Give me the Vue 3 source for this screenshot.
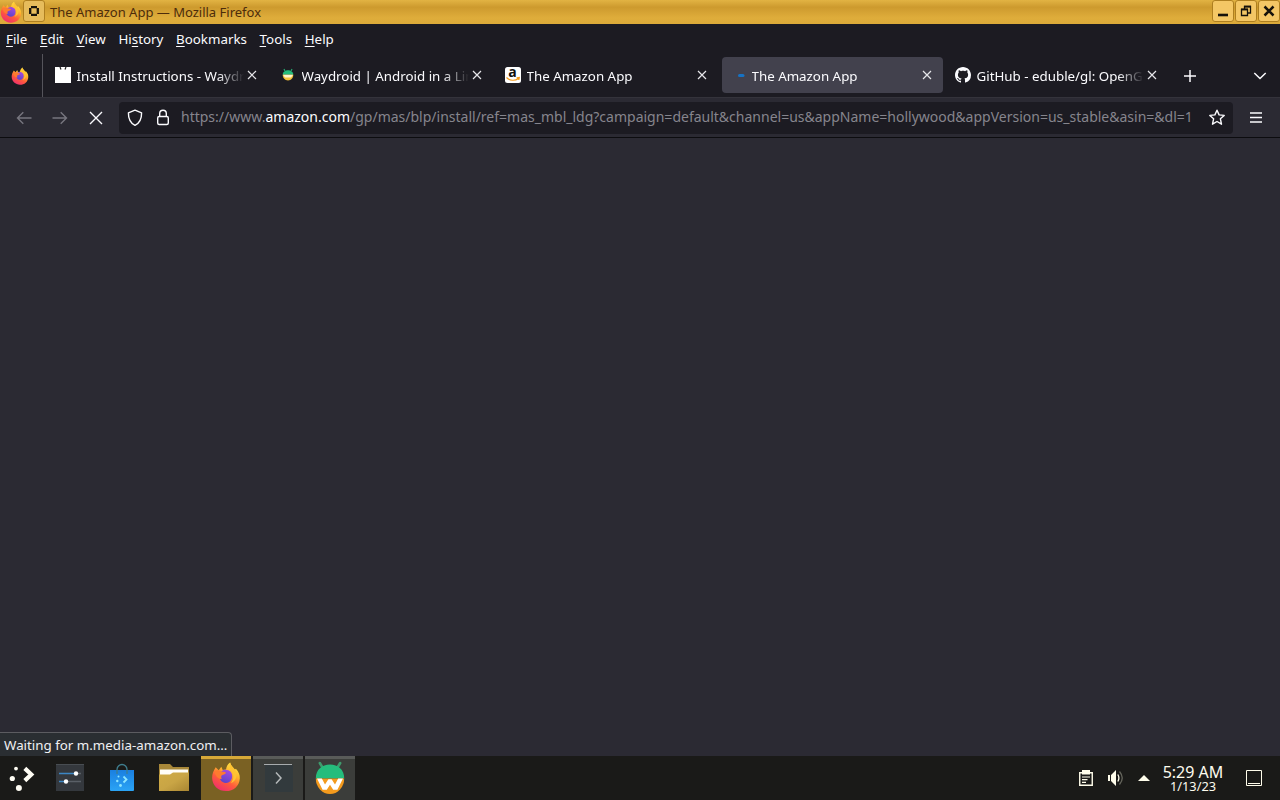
<template>
  <div class="desktop">
    <svg class="defs" width="0" height="0">
      <defs>
        <linearGradient id="flame" x1="0.8" y1="0" x2="0.25" y2="1">
          <stop offset="0" stop-color="#fff04a" />
          <stop offset="0.35" stop-color="#ffb32c" />
          <stop offset="0.65" stop-color="#ff5a3c" />
          <stop offset="1" stop-color="#ee2b72" />
        </linearGradient>
        <linearGradient id="globe" x1="0.7" y1="0" x2="0.3" y2="1">
          <stop offset="0" stop-color="#a64be0" />
          <stop offset="1" stop-color="#5a43c8" />
        </linearGradient>
        <linearGradient id="bag" x1="0" y1="0" x2="0" y2="1">
          <stop offset="0" stop-color="#1a7fe0" />
          <stop offset="1" stop-color="#2ba4f5" />
        </linearGradient>
        <linearGradient id="folder" x1="0" y1="0" x2="1" y2="1">
          <stop offset="0" stop-color="#d0ab45" />
          <stop offset="0.5" stop-color="#c9a545" />
          <stop offset="1" stop-color="#a98632" />
        </linearGradient>
        <symbol id="firefox" viewBox="0 0 32 32">
          <path fill="url(#flame)" d="M5 6 L8.2 9.3 L11 5.5 L12.5 9 L16 8.5 C16.5 5 18 2.5 20.4 1 C21 4 23.5 6 25.5 8.5 L26.6 7.6 C29.5 11 31 14 30.7 18 C30.3 26 24 31.5 16 31.5 C7.8 31.5 1.5 25.5 1.2 17.5 C1.1 13 2.8 9.5 5 6 Z" />
          <path fill="url(#globe)" d="M11.5 10.3 C14 8 18.5 8.2 21 11 C23.5 14 23 19.5 19.5 21.8 C16 24 11.5 22.5 9.8 19.2 C8.5 16.5 9.2 12.5 11.5 10.3 Z" />
          <path fill="#ff7a2f" d="M3.6 10.5 C6 8.8 9.5 9.2 11.5 11 C13.2 10.6 15 11 16 12 C15.2 13.6 13.6 14 12 14.4 C10.6 15.4 10.5 17 11.6 18.5 C8 19.5 4.5 15.5 3.6 10.5 Z" />
          <path fill="#ffc233" d="M20.4 1 C19 5.5 20.5 8.5 22.5 11.3 C24.7 15 24.3 19.5 21.2 23 C25.5 21.5 28 17 27.2 12.5 C26.5 8 21.5 6 20.4 1 Z" />
        </symbol>
        <symbol id="droid" viewBox="0 0 32 34">
          <path d="M5.8 2 L8.8 7 M26.2 2 L23.2 7" stroke="#3f9a6c" stroke-width="2.6" stroke-linecap="round" />
          <path d="M1.8 17.5 C1.8 8.5 8 3.5 16 3.5 S30.2 8.5 30.2 17.5 Z" fill="#25bd7c" />
          <path d="M1.8 17.5 H30.2 A14.2 15.5 0 0 1 1.8 17.5 Z" fill="#f39a1d" />
          <path d="M3 17.5 L8.6 28.8 H12.8 L16 23.8 L19.2 28.8 H23.4 L29 17.5 H24.2 L21 23.6 L17.6 18.3 H14.4 L11 23.6 L7.8 17.5 Z" fill="#fff" />
        </symbol>
      </defs>
    </svg>

    <header class="titlebar">
      <svg class="title-logo" width="22" height="22"><use href="#firefox" /></svg>
      <span class="win-btn pin">
        <svg width="20" height="20"><path d="M7 6.2 H13 M7 13.8 H13 M6.2 7 V13 M13.8 7 V13" fill="none" stroke="#17130b" stroke-width="2.3" /></svg>
      </span>
      <span class="title">The Amazon App — Mozilla Firefox</span>
      <div class="win-controls">
        <span class="win-btn"><svg width="20" height="20"><path d="M5 14 H15" stroke="#17130b" stroke-width="2.6" /></svg></span>
        <span class="win-btn"><svg width="20" height="20" fill="none" stroke="#17130b"><path d="M5.5 8.5 H11.5 V14.5 H5.5 Z M8.5 8 V5.5 H14.5 V12 H12" stroke-width="1.3" /><path d="M5 8.3 H12 M8 5.6 H15" stroke-width="1.8" /></svg></span>
        <span class="win-btn"><svg width="20" height="20"><path d="M5.5 5.5 L14.5 14.5 M14.5 5.5 L5.5 14.5" stroke="#17130b" stroke-width="2.5" /></svg></span>
      </div>
    </header>

    <nav class="menubar">
      <span v-for="m in menus" :key="m.key + m.after">{{ m.before }}<u>{{ m.key }}</u>{{ m.after }}</span>
    </nav>

    <div class="tabs">
      <div class="view"><svg width="18" height="18"><use href="#firefox" /></svg></div>
      <div v-for="(t, i) in tabs" :key="i" class="tab" :class="{ active: t.active }">
        <svg v-if="t.icon === 'docs'" class="fav" viewBox="0 0 16 16"><path d="M0 0 H16 V16 H0 Z" fill="#fff" /><path d="M5 0 L6 2.5 M11 0 L10 2.5" stroke="#222" stroke-width="1.2" /></svg>
        <svg v-else-if="t.icon === 'droid'" class="fav" viewBox="0 0 16 16">
          <path d="M4 2 L5 4 M12 2 L11 4" stroke="#25a870" stroke-width="1.2" />
          <path d="M2.7 7.8 C2.7 1.8 13.3 1.8 13.3 7.8 Z" fill="#25bd7c" />
          <path d="M2.7 7.8 H13.3 C13.3 11 11 13.5 8 13.5 S2.7 11 2.7 7.8 Z" fill="#f5c33a" />
          <path d="M3 7.8 H13 L11 10.6 H5 Z" fill="#fff4cf" />
        </svg>
        <svg v-else-if="t.icon === 'amazon'" class="fav" viewBox="0 0 16 16">
          <rect width="16" height="16" rx="2.5" fill="#fff" />
          <text x="7.6" y="9.8" text-anchor="middle" class="amazon-a">a</text>
          <path d="M1.5 10.5 C5 14 10 14 13.5 11.5 M11.6 10.8 L14.3 10.5 L13.8 13" fill="none" stroke="#f49b1a" stroke-width="1.2" />
        </svg>
        <svg v-else-if="t.icon === 'github'" class="fav" viewBox="0 0 16 16"><path fill="#fbfbfe" d="M8 0C3.58 0 0 3.58 0 8c0 3.54 2.29 6.53 5.47 7.59.4.07.55-.17.55-.38 0-.19-.01-.82-.01-1.49-2.01.37-2.53-.49-2.69-.94-.09-.23-.48-.94-.82-1.13-.28-.15-.68-.52-.01-.53.63-.01 1.08.58 1.23.82.72 1.21 1.87.87 2.33.66.07-.52.28-.87.51-1.07-1.78-.2-3.64-.89-3.64-3.95 0-.87.31-1.59.82-2.15-.08-.2-.36-1.02.08-2.12 0 0 .67-.21 2.2.82.64-.18 1.32-.27 2-.27s1.36.09 2 .27c1.53-1.04 2.2-.82 2.2-.82.44 1.1.16 1.92.08 2.12.51.56.82 1.27.82 2.15 0 3.07-1.87 3.75-3.65 3.95.29.25.54.73.54 1.48 0 1.07-.01 1.93-.01 2.2 0 .21.15.46.55.38A8.01 8.01 0 0 0 16 8c0-4.42-3.58-8-8-8z" /></svg>
        <svg v-else class="fav" viewBox="0 0 16 16"><rect x="8" y="7" width="6.5" height="3" rx="1.5" fill="#1672c4" /></svg>
        <span class="tab-title">{{ t.title }}</span>
        <svg class="close" width="10" height="10"><path d="M1 1 L9 9 M9 1 L1 9" stroke="#e6e6ea" stroke-width="1.2" /></svg>
      </div>
      <svg class="new-tab" width="14" height="14"><path d="M7 1 V13 M1 7 H13" stroke="#fbfbfe" stroke-width="1.5" /></svg>
      <svg class="all-tabs" width="14" height="14"><path d="M1.3 4 L7 9.5 L12.7 4" fill="none" stroke="#fbfbfe" stroke-width="1.5" /></svg>
    </div>

    <div class="toolbar">
      <svg class="tool" width="16" height="16" stroke="#77767f"><path d="M15.5 8 H1.5 M7.3 2.2 L1.5 8 L7.3 13.8" /></svg>
      <svg class="tool" width="16" height="16" stroke="#77767f"><path d="M.5 8 H14.5 M8.7 2.2 L14.5 8 L8.7 13.8" /></svg>
      <svg class="tool" width="16" height="16" stroke="#fbfbfe"><path d="M2 2 L14 14 M14 2 L2 14" /></svg>
      <div class="urlbar">
        <svg class="shield" width="16" height="18"><path d="M8 1.2 L14.6 3.8 C14.7 9.8 12.5 14.2 8 16.4 C3.5 14.2 1.3 9.8 1.4 3.8 Z" /></svg>
        <svg class="lock" width="14" height="18"><rect x="1.7" y="7.5" width="10.6" height="8" rx="1.5" /><path d="M3.7 7.5 V4.5 A3.3 3.3 0 0 1 10.3 4.5 V7.5" /></svg>
        <span class="url">https://www.<b>amazon.com</b>/gp/mas/blp/install/ref=mas_mbl_ldg?campaign=default&amp;channel=us&amp;appName=hollywood&amp;appVersion=us_stable&amp;asin=&amp;dl=1</span>
        <svg class="star" width="18" height="18"><path d="M9 1.2 L11.1 5.9 L16.2 6.4 L12.4 9.8 L13.5 15.2 L9 12.5 L4.5 15.2 L5.6 9.8 L1.8 6.4 L6.9 5.9 Z" /></svg>
      </div>
      <svg class="burger" width="12" height="12"><path d="M0 1 H12 M0 5.5 H12 M0 10 H12" stroke="#fbfbfe" stroke-width="1.4" /></svg>
    </div>

    <main class="page">
      <div class="status">Waiting for m.media-amazon.com...</div>
    </main>

    <footer class="panel">
      <div class="launcher start">
        <svg width="32" height="32"><g fill="#fffdf4"><circle cx="10" cy="6.6" r="1.9" /><circle cx="6.3" cy="16.5" r="2.6" /><circle cx="12.9" cy="26" r="3" /></g><path d="M18.8 6.4 L25.3 12.5 L18.8 18.6" fill="none" stroke="#fffdf4" stroke-width="4.2" /></svg>
      </div>
      <div class="launcher">
        <svg width="32" height="32"><rect x="2" y="2" width="28" height="27" fill="#34383d" /><path d="M2 2.5 H30" stroke="#484d52" /><path d="M5 11.5 H22 M5 19.5 H12" stroke="#3c86c4" stroke-width="1.5" /><path d="M22 11.5 H27 M12 19.5 H27" stroke="#5a6067" stroke-width="1.5" /><circle cx="22" cy="11.5" r="2.2" fill="#fff" /><circle cx="12" cy="19.5" r="2.2" fill="#fff" /></svg>
      </div>
      <div class="launcher">
        <svg width="32" height="32"><path d="M4 8 H28 V28 Q28 29 27 29 H5 Q4 29 4 28 Z" fill="url(#bag)" /><path d="M11 12 V7.5 A5 5 0 0 1 21 7.5 V12" fill="none" stroke="#3f7e8e" stroke-width="1.3" /><path d="M17.5 14.5 L20.5 17.5 L17.5 20.5" fill="none" stroke="#8ee6ff" stroke-width="1.8" /><g fill="#8ee6ff"><circle cx="12.5" cy="14.5" r="1" /><circle cx="11.3" cy="19" r="1.2" /><circle cx="14.5" cy="23.5" r="1.4" /></g></svg>
      </div>
      <div class="launcher">
        <svg width="32" height="32"><path d="M1 2 H12 L15 5 H31 V13 H1 Z" fill="#a78739" /><path d="M2 7.5 H30 V13 H2 Z" fill="#fffdf7" /><path d="M1 12.5 H12 L15 10.5 H31 V29 H1 Z" fill="url(#folder)" /></svg>
      </div>
      <div class="task current"><svg width="30" height="31"><use href="#firefox" /></svg></div>
      <div class="task">
        <svg width="32" height="32"><rect x="3" y="3" width="28" height="27" fill="#323a3d" /><path d="M2 2.5 H30" stroke="#a7abad" /><path d="M14 10.5 L19 16 L14 21.5" fill="none" stroke="#b5b9ba" stroke-width="1.5" /></svg>
      </div>
      <div class="task droid"><svg width="32" height="34"><use href="#droid" /></svg></div>

      <div class="tray">
        <svg class="clip" width="14" height="16" fill="none" stroke="#fffdeb"><path d="M.75 2.75 H13.25 V15.25 H.75 Z" stroke-width="1.4" /><path d="M3 0 H11 V4.5 H3 Z" fill="#fffdeb" stroke="none" /><path d="M3 7 H11 M3 9.7 H8.5 M3 12.4 H7" stroke-width="1.2" /></svg>
        <svg class="speaker" width="18" height="18"><path d="M1 6 H3 V12 H1 Z M4 6 L9 1 V17 L4 12 Z" fill="#fffdeb" /><path d="M10.8 5.5 Q13 9 10.8 12.5" fill="none" stroke="#fffdeb" stroke-width="1.3" /><path d="M12.5 2.5 Q18 9 12.5 15.5" fill="none" stroke="#64645b" stroke-width="1.3" /></svg>
        <svg class="arrow" width="12" height="6"><path d="M0 6 L6 0 L12 6 Z" fill="#fffdeb" /></svg>
        <div class="clock">
          <span class="time">5:29 AM</span>
          <span class="date">1/13/23</span>
        </div>
        <svg class="show-desktop" width="16" height="16" fill="none" stroke="#fffdeb"><path d="M.5 .5 H15.5 V15.5 H.5 Z M2 13.5 H14" /></svg>
      </div>
    </footer>
  </div>
</template>

<script setup>
const menus = [
  { before: '', key: 'F', after: 'ile' },
  { before: '', key: 'E', after: 'dit' },
  { before: '', key: 'V', after: 'iew' },
  { before: 'Hi', key: 's', after: 'tory' },
  { before: '', key: 'B', after: 'ookmarks' },
  { before: '', key: 'T', after: 'ools' },
  { before: '', key: 'H', after: 'elp' }
]

const tabs = [
  { icon: 'docs', title: 'Install Instructions - Waydroid' },
  { icon: 'droid', title: 'Waydroid | Android in a Linux container' },
  { icon: 'amazon', title: 'The Amazon App' },
  { icon: 'loading', title: 'The Amazon App', active: true },
  { icon: 'github', title: 'GitHub - eduble/gl: OpenGL' }
]
</script>

<style>
body {
  margin: 0;
  background: #2b2a33;
}
</style>

<style scoped>
.desktop {
  width: 1280px;
  height: 800px;
  display: flex;
  flex-direction: column;
  overflow: hidden;
  font-family: "Noto Sans", sans-serif;
  font-size: 13.33px;
  color: #fbfbfe;
  white-space: nowrap;
}

.defs {
  position: absolute;
}

svg {
  display: block;
  flex: none;
}

.titlebar {
  height: 24px;
  display: flex;
  align-items: center;
  background: linear-gradient(#e2b343 0, #cd9a2e 30%, #dfad3b 75%, #dcaa39);
  color: #4d2c0b;
}

.title-logo {
  margin-right: 1px;
}

.win-btn {
  width: 20px;
  height: 20px;
  border: 1px solid #ae7f20;
  border-radius: 3px;
  background: #f4c765;
}

.win-btn.pin {
  background: #e6bc5c;
  margin-bottom: 2px;
}

.title {
  margin-left: 5px;
  font-size: 13px;
}

.win-controls {
  margin-left: auto;
  margin-bottom: 2px;
  display: flex;
  gap: 1px;
}

.menubar {
  height: 30px;
  display: flex;
  align-items: center;
  gap: 12.7px;
  padding-left: 6px;
  background: #1c1b22;
}

.menubar u {
  text-underline-offset: 2px;
}

.tabs {
  height: 43px;
  display: flex;
  align-items: center;
  background: #1c1b22;
}

.view {
  width: 43px;
  height: 43px;
  box-sizing: border-box;
  padding-left: 11px;
  margin-right: 4px;
  border-right: 1px solid #55545b;
  display: flex;
  align-items: center;
}

.tab {
  width: 221px;
  height: 36px;
  margin-right: 4px;
  margin-bottom: 1px;
  padding: 0 11px 0 8px;
  box-sizing: border-box;
  display: flex;
  align-items: center;
  border-radius: 4px;
}

.tab.active {
  background: #42414d;
}

.fav {
  width: 16px;
  height: 16px;
  margin-right: 5.5px;
}

.amazon-a {
  font: bold 14px "Open Sans", sans-serif;
  fill: #111;
}

.tab-title {
  flex: 1;
  overflow: hidden;
  margin-right: 3px;
  padding-top: 2px;
  mask-image: linear-gradient(to left, transparent, #000 26px);
}

.new-tab {
  margin-left: 10.5px;
}

.all-tabs {
  margin-left: auto;
  margin-right: 13px;
}

.toolbar {
  height: 41px;
  box-sizing: border-box;
  display: flex;
  align-items: center;
  background: #2b2a33;
  border-top: 1px solid #34333b;
  border-bottom: 1px solid #0c0c0f;
}

.tool {
  margin-left: 16px;
  margin-right: 4px;
  fill: none;
  stroke-width: 1.4;
}

.urlbar {
  width: 1114px;
  height: 32px;
  margin-left: 11px;
  box-sizing: border-box;
  padding-left: 8px;
  display: flex;
  align-items: center;
  background: #1c1b22;
  border-radius: 4px;
}

.urlbar svg {
  fill: none;
  stroke: #fbfbfe;
  stroke-width: 1.4;
  stroke-linejoin: round;
}

.lock {
  margin-left: 13px;
}

.url {
  width: 1012px;
  margin-left: 11px;
  margin-right: 15px;
  margin-bottom: 2px;
  font-size: 14px;
  color: #86858d;
}

.url b {
  font-weight: 400;
  color: #fbfbfe;
}

.burger {
  margin-left: 17px;
}

.page {
  height: 618px;
  display: flex;
  align-items: flex-end;
  background: #2b2a33;
}

.status {
  width: 232px;
  height: 24px;
  box-sizing: border-box;
  padding-left: 4px;
  line-height: 25px;
  background: #2a2e32;
  border-top: 1px solid #5c5c61;
  border-right: 1px solid #5c5c61;
  border-top-right-radius: 4px;
  color: #f0f0f2;
}

.panel {
  height: 44px;
  display: flex;
  background: #1a1a18;
}

.launcher {
  width: 52px;
  display: flex;
  align-items: center;
  justify-content: center;
}

.launcher.start {
  width: 44px;
}

.task {
  width: 50px;
  height: 44px;
  margin-left: 2px;
  box-sizing: border-box;
  border-top: 3px solid #595b59;
  background: #3b3d3a;
  display: flex;
  justify-content: center;
  padding-top: 3px;
}

.task.current {
  margin-left: 1px;
  padding-top: 2px;
  background: #7a6123;
  border-top-color: #d7a938;
}

.task.droid {
  padding-top: 2px;
}

.tray {
  margin-left: auto;
  display: flex;
  align-items: center;
  padding-right: 18px;
  color: #fdfbee;
}

.speaker {
  margin-left: 14px;
}

.arrow {
  margin-left: 13px;
}

.clock {
  width: 64px;
  margin: 0 21px 0 11px;
  padding-bottom: 1px;
  display: flex;
  flex-direction: column;
  align-items: center;
}

.time {
  font-size: 16px;
  line-height: 18px;
}

.date {
  font-size: 12.8px;
  line-height: 11px;
}
</style>
